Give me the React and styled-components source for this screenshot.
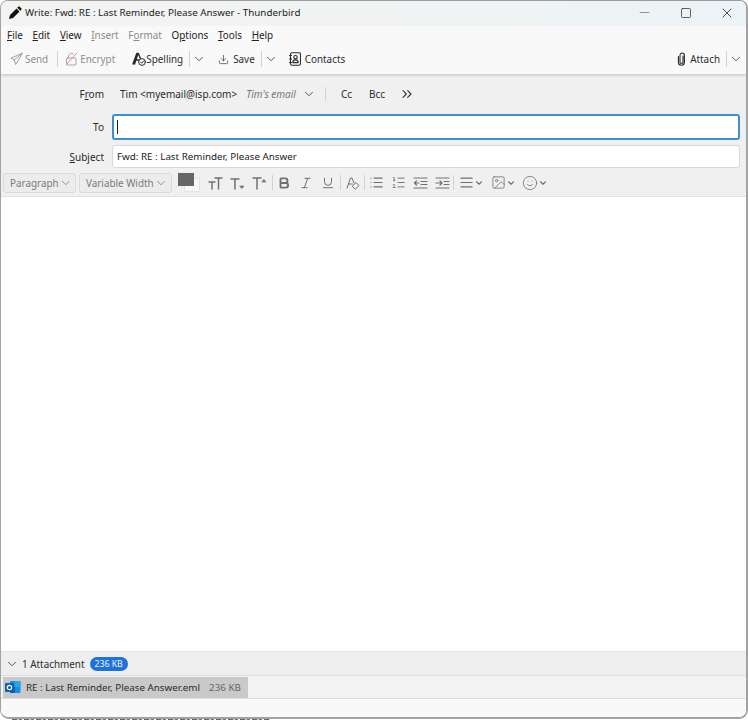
import React from "react";
import styled, { createGlobalStyle } from "styled-components";
import { ChevronDown, ChevronsRight, Download, Bold, Italic, Underline, List, ListOrdered, AlignJustify, Image as ImageIcon, Smile, X, Minus, Square } from "lucide-react";

const Global = createGlobalStyle`
  html, body { margin: 0; padding: 0; background: #fff; height: 100%; overflow: hidden; }
  body { font-family: "Noto Sans", "Open Sans", sans-serif; font-size: 9.8px; color: #2a2a2a; }
  * { box-sizing: border-box; }
  u { text-underline-offset: 1px; text-decoration-thickness: 1px; }
`;

const Window = styled.div`
  width: 748px; height: 719px; display: flex; flex-direction: column;
  border: 1px solid #a2a2a2; border-top-color: #9c9c9c; border-radius: 8px 8px 9px 9px; overflow: hidden; background: #fff;
  border-width: 1px 2px 2px 1px;
`;
const PageRemnant = styled.div`
  width: 258px; height: 1px; margin-left: 12px;
  background: repeating-linear-gradient(90deg, #666 0 5px, #ccc 5px 7px, #777 7px 10px, #fff 10px 12px);
`;
const TitleBar = styled.div`
  height: 25px; flex: none; display: flex; align-items: center; padding: 0 0 2px 7px;
  background: linear-gradient(90deg, #f3f3f2 0%, #f1f3f3 50%, #ebf3f6 100%);
`;
const TitleText = styled.span` margin-left: 3px; font-size: 9.8px; color: #222; white-space: nowrap; flex: 1; `;
const WinButton = styled.span` width: 41px; display: flex; justify-content: center; align-items: center; color: ${p => p.$c || "#222"}; `;
const WinButtons = styled.div` display: flex; margin-right: -1px; `;
const MenuBar = styled.div`
  height: 20px; flex: none; display: flex; align-items: center; gap: 9.7px; padding: 0 0 3px 6px; background: #f9f9f9; font-size: 9.9px;
`;
const MenuItem = styled.span` color: ${p => p.$off ? "#8a8a8a" : "#222"}; `;
const Toolbar = styled.div`
  height: 29px; flex: none; display: flex; align-items: center; background: #f9f9f9; border-bottom: 1px solid #d4d4d4; box-shadow: 0 1px 2px rgba(0,0,0,.12); position: relative; padding: 0 0 2px 9px; font-size: 9.9px;
`;
const ToolButton = styled.span`
  display: flex; align-items: center; gap: ${p => p.$gap ?? 3}px; margin-left: ${p => p.$ml || 0}px; color: ${p => p.$off ? "#8c8c8c" : "#2b2b2b"}; white-space: nowrap;
`;
const Sep = styled.span` width: 1px; height: ${p => p.$h || 16}px; background: #d2d2d2; margin-left: ${p => p.$ml || 0}px; flex: none; `;
const Spacer = styled.span` flex: 1; `;
const EndGap = styled.span` flex: none; width: 3px; `;
const Chevron = styled(ChevronDown).attrs({ size: 14, strokeWidth: 1.4 })` margin-left: ${p => p.$ml || 0}px; flex: none; color: #333; `;
const Header = styled.div`
  flex: none; height: 122px; background: #f0f0f0; padding: 9px 6px 0 0; display: flex; flex-direction: column; border-bottom: 1px solid #e2e2e2;
`;
const FieldRow = styled.div` display: flex; align-items: center; height: ${p => p.$h}px; margin-top: ${p => p.$mt || 0}px; `;
const Label = styled.span` width: 103px; text-align: right; font-size: 10px; color: #2b2b2b; flex: none; `;
const FromValue = styled.span` margin-left: 16px; font-size: 10px; color: #2b2b2b; white-space: nowrap; `;
const Identity = styled.span` margin-left: 9px; font-size: 10px; font-style: italic; color: #777; white-space: nowrap; `;
const HeaderLink = styled.span` margin-left: ${p => p.$ml}px; font-size: 10px; color: #2b2b2b; `;
const MoreIcon = styled(ChevronsRight).attrs({ size: 16, strokeWidth: 1.6 })` margin-left: 14px; color: #333; flex: none; `;
const FieldInput = styled.div`
  margin-left: 8px; flex: 1; height: 100%; display: flex; align-items: center; padding-left: ${p => p.$focus ? 3 : 4}px; background: #fff; border-radius: 3px; font-size: 9.8px; color: #222;
  border: ${p => p.$focus ? "2px solid #3d8fcd" : "1px solid #d9d9d9"};
`;
const Caret = styled.span` width: 1px; height: 14px; background: #222; `;
const FormatBar = styled.div`
  display: flex; align-items: center; height: 21px; margin-top: 4px; padding-left: 2px; color: #707070;
`;
const SelectBox = styled.span`
  width: ${p => p.$w}px; height: 20px; margin-left: ${p => p.$ml || 0}px; display: flex; align-items: center; justify-content: space-between; padding: 0 3px 0 6px; background: #ececec; border: 1px solid #dadada; border-radius: 3px; font-size: 9.9px; color: #7a7a7a; flex: none; white-space: nowrap;
`;
const Swatches = styled.span` position: relative; width: 22px; height: 19px; margin-left: 6px; flex: none; `;
const FgSwatch = styled.span` position: absolute; left: 0; top: 0; width: 16px; height: 13px; background: #666; z-index: 1; `;
const BgSwatch = styled.span` position: absolute; left: 6px; top: 5px; width: 16px; height: 14px; background: #f8f8f8; border: 1px solid #e2e2e2; border-radius: 1px; `;
const FormatIcon = styled.span`
  display: flex; align-items: center; justify-content: center; width: ${p => p.$w || 22}px; flex: none; margin-left: ${p => p.$ml || 0}px; color: #707070;
`;
const Body = styled.div` flex: 1; background: #fff; `;
const AttachHeader = styled.div`
  flex: none; height: 25px; background: #eeeeee; border-top: 1px solid #e4e4e4; border-bottom: 1px solid #dcdcdc; display: flex; align-items: center; padding-left: 4px; font-size: 9.9px; color: #2b2b2b;
`;
const AttachCount = styled.span` margin-left: 3px; `;
const Badge = styled.span`
  margin-left: 5px; height: 14px; padding: 0 5px; background: #1f73d8; border-radius: 8px; color: #e8f2ff; font-size: 8.7px; display: flex; align-items: center;
`;
const AttachList = styled.div`
  flex: none; height: 23px; background: #f3f3f3; border-bottom: 1px solid #dedede; display: flex; align-items: center; padding-left: 2px;
`;
const AttachItem = styled.div`
  height: 21px; width: 245px; background: #c9c9c9; display: flex; align-items: center; padding-left: 2px; font-size: 9.8px; color: #2b2b2b; white-space: nowrap;
`;
const AttachName = styled.span` margin-left: 5px; `;
const AttachSize = styled.span` margin-left: 9px; color: #666; `;
const StatusBar = styled.div` flex: none; height: 18px; background: #f9f9f9; `;

const svgProps = { fill: "none", stroke: "currentColor", strokeLinecap: "round", strokeLinejoin: "round" };

const PenIcon = () => (
  <svg width="14" height="14" viewBox="0 0 14 14"><path d="M1 13l1-4 6.500-6.500 3 3L5 12z M9.300 1.700l1-1a1 1 0 0 1 1.400 0l1.600 1.600a1 1 0 0 1 0 1.400l-1 1z" fill="#111" /></svg>
);
const SendIcon = () => (
  <svg width="13" height="14" viewBox="0 0 14 14" {...svgProps} strokeWidth="1" color="#9a9a9a"><path d="M13 1L1 6l3.600 2L6 12.600z M13 1L4.600 8" /></svg>
);
const EncryptIcon = () => (
  <svg width="13" height="14" viewBox="0 0 13 14" {...svgProps} strokeWidth="1"><rect x="1.500" y="6" width="9.500" height="7" rx="1" stroke="#b0a3a3" /><path d="M3.500 6V4a3 3 0 0 1 5-2" stroke="#b0a3a3" /><path d="M1 13L12 1" stroke="#e58f9d" /></svg>
);
const SpellIcon = () => (
  <svg width="14" height="14" viewBox="0 0 14 14" {...svgProps} strokeWidth="1"><path d="M1 12L4.800 1.500h1.600L9 8 M3 8h5 M2.500 12l3-9" strokeWidth="1.400" /><circle cx="10" cy="10" r="3.400" fill="#f9f9f9" /><path d="M8.500 10l1.200 1.200 2-2.200" /></svg>
);
const ContactsIcon = () => (
  <svg width="12" height="14" viewBox="0 0 12 14" {...svgProps} strokeWidth="1.100"><rect x="1.500" y=".8" width="10" height="12.400" rx="1.500" /><path d="M.5 3.500h2 M.5 7h2 M.5 10.500h2" /><circle cx="6.500" cy="5.200" r="1.700" /><path d="M3.800 10.600a2.700 2.700 0 0 1 5.400 0z" /></svg>
);
const ClipIcon = () => (
  <svg width="9" height="14" viewBox="0 0 9 14" {...svgProps} strokeWidth="1.100"><path d="M6 4v6a1.500 1.500 0 0 1-3 0V3.200a2.200 2.200 0 0 1 4.400 0v7a3 3 0 0 1-6 0V4.500" /></svg>
);
const BigSmallT = () => (
  <svg width="15" height="14" viewBox="0 0 15 14" {...svgProps} strokeWidth="1.500"><path d="M1 6h6 M4 6v7 M7 2h7 M10.500 2v11" /></svg>
);
const SmallerT = () => (
  <svg width="15" height="14" viewBox="0 0 15 14" {...svgProps} strokeWidth="1.500"><path d="M1 3h8 M5 3v10" /><path d="M10 10h4l-2 2.500z" fill="currentColor" strokeWidth=".6" /></svg>
);
const LargerT = () => (
  <svg width="15" height="14" viewBox="0 0 15 14" {...svgProps} strokeWidth="1.500"><path d="M1 2h8 M5 2v11" /><path d="M10 6h4l-2-2.500z" fill="currentColor" strokeWidth=".6" /></svg>
);
const ClearIcon = () => (
  <svg width="14" height="14" viewBox="0 0 14 14" {...svgProps} strokeWidth="1"><path d="M1 12L4.500 2h1.500L8 7 M2.500 8h4" /><path d="M6.500 10l3.500-3.500 3 3L9.500 13z" /></svg>
);
const OutdentIcon = () => (
  <svg width="15" height="14" viewBox="0 0 15 14" {...svgProps} strokeWidth="1.200"><path d="M1 2h13 M1 12h13 M8 5.500h6 M8 8.500h6 M6 7H1.500 M3.500 5L1.500 7l2 2" /></svg>
);
const IndentIcon = () => (
  <svg width="15" height="14" viewBox="0 0 15 14" {...svgProps} strokeWidth="1.200"><path d="M1 2h13 M1 12h13 M9 5.500h5 M9 8.500h5 M1 7h6 M5 5l2 2-2 2" /></svg>
);
const OutlookIcon = () => (
  <svg width="16" height="14" viewBox="0 0 16 14">
    <rect x="5" y="1" width="10.500" height="12" rx="1" fill="#1490df" />
    <rect x="10" y="1" width="5.500" height="6" fill="#28a8ea" />
    <rect x="5" y="7" width="5" height="6" fill="#0364b8" />
    <rect x="0" y="3" width="9" height="9" rx="1" fill="#0f62ad" />
    <circle cx="4.500" cy="7.500" r="2.200" fill="none" stroke="#fff" strokeWidth="1.200" />
  </svg>
);

const Caretted = ({ children, ml }) => (
  <FormatIcon $w={31} $ml={ml}>{children}<ChevronDown size={10} strokeWidth={2.6} /></FormatIcon>
);

export default function App() {
  return (
    <>
      <Global />
      <Window>
        <TitleBar>
          <PenIcon />
          <TitleText>Write: Fwd: RE : Last Reminder, Please Answer - Thunderbird</TitleText>
          <WinButtons>
            <WinButton $c="#777"><Minus size={15} strokeWidth={1.2} /></WinButton>
            <WinButton><Square size={12} strokeWidth={1.4} /></WinButton>
            <WinButton><X size={16} strokeWidth={1.2} /></WinButton>
          </WinButtons>
        </TitleBar>
        <MenuBar>
          <MenuItem><u>F</u>ile</MenuItem>
          <MenuItem><u>E</u>dit</MenuItem>
          <MenuItem><u>V</u>iew</MenuItem>
          <MenuItem $off><u>I</u>nsert</MenuItem>
          <MenuItem $off>F<u>o</u>rmat</MenuItem>
          <MenuItem>O<u>p</u>tions</MenuItem>
          <MenuItem><u>T</u>ools</MenuItem>
          <MenuItem><u>H</u>elp</MenuItem>
        </MenuBar>
        <Toolbar>
          <ToolButton $off $gap={2}><SendIcon />Send</ToolButton>
          <Sep $ml={9} />
          <ToolButton $off $ml={7} $gap={2}><EncryptIcon />Encrypt</ToolButton>
          <ToolButton $ml={17} $gap={0}><SpellIcon />Spelling</ToolButton>
          <Sep $ml={6} />
          <Chevron $ml={2} />
          <ToolButton $ml={12} $gap={4}><Download size={11} strokeWidth={1.4} />Save</ToolButton>
          <Sep $ml={6} />
          <Chevron $ml={2} />
          <ToolButton $ml={11} $gap={4}><ContactsIcon />Contacts</ToolButton>
          <Spacer />
          <ToolButton $gap={4}><ClipIcon />Attach</ToolButton>
          <Sep $ml={6} />
          <Chevron $ml={2} />
          <EndGap />
        </Toolbar>
        <Header>
          <FieldRow $h={19}>
            <Label>F<u>r</u>om</Label>
            <FromValue>Tim &lt;myemail@isp.com&gt;</FromValue>
            <Identity>Tim's email</Identity>
            <Chevron $ml={6} />
            <Sep $ml={9} $h={14} />
            <HeaderLink $ml={15}>Cc</HeaderLink>
            <HeaderLink $ml={17}>Bcc</HeaderLink>
            <MoreIcon />
          </FieldRow>
          <FieldRow $h={26} $mt={11}>
            <Label>To</Label>
            <FieldInput $focus><Caret /></FieldInput>
          </FieldRow>
          <FieldRow $h={23} $mt={5}>
            <Label><u>S</u>ubject</Label>
            <FieldInput>Fwd: RE : Last Reminder, Please Answer</FieldInput>
          </FieldRow>
          <FormatBar>
            <SelectBox $w={73}>Paragraph<ChevronDown size={14} strokeWidth={1.4} /></SelectBox>
            <SelectBox $w={93} $ml={3}>Variable Width<ChevronDown size={14} strokeWidth={1.4} /></SelectBox>
            <Swatches><BgSwatch /><FgSwatch /></Swatches>
            <FormatIcon $ml={4}><BigSmallT /></FormatIcon>
            <FormatIcon><SmallerT /></FormatIcon>
            <FormatIcon><LargerT /></FormatIcon>
            <Sep $ml={2} $h={15} />
            <FormatIcon><Bold size={14} strokeWidth={3.2} /></FormatIcon>
            <FormatIcon><Italic size={14} strokeWidth={1.7} /></FormatIcon>
            <FormatIcon><Underline size={14} strokeWidth={1.7} /></FormatIcon>
            <Sep $ml={1} $h={15} />
            <FormatIcon $ml={1}><ClearIcon /></FormatIcon>
            <Sep $h={15} />
            <FormatIcon><List size={15} strokeWidth={1.7} /></FormatIcon>
            <FormatIcon><ListOrdered size={15} strokeWidth={1.5} /></FormatIcon>
            <FormatIcon><OutdentIcon /></FormatIcon>
            <FormatIcon><IndentIcon /></FormatIcon>
            <Sep $h={15} />
            <Caretted ml={2}><AlignJustify size={15} strokeWidth={1.7} /></Caretted>
            <Caretted ml={1}><ImageIcon size={15} strokeWidth={1.3} /></Caretted>
            <Caretted ml={0}><Smile size={16} strokeWidth={1.2} /></Caretted>
          </FormatBar>
        </Header>
        <Body />
        <AttachHeader>
          <Chevron />
          <AttachCount>1 Attachment</AttachCount>
          <Badge>236 KB</Badge>
        </AttachHeader>
        <AttachList>
          <AttachItem>
            <OutlookIcon />
            <AttachName>RE : Last Reminder, Please Answer.eml</AttachName>
            <AttachSize>236 KB</AttachSize>
          </AttachItem>
        </AttachList>
        <StatusBar />
      </Window>
      <PageRemnant />
    </>
  );
}
